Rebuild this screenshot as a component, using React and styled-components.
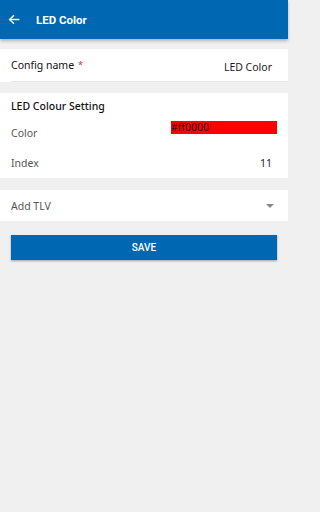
import React from 'react'
import styled, { createGlobalStyle } from 'styled-components'

const Global = createGlobalStyle`
  html, body {
    margin: 0;
    padding: 0;
    background: #f0f0f0;
    font-family: "Noto Sans", Roboto, sans-serif;
  }
`

const Page = styled.div`
  width: 288px;
  min-height: 512px;
  background: #f0f0f0;
`

const Header = styled.div`
  height: 39px;
  background: #0067b2;
  display: flex;
  align-items: center;
  padding-left: 8px;
  box-shadow: 0 2px 3px rgba(0, 0, 0, 0.25);
  color: #fff;
`

const HeaderTitle = styled.span`
  font-family: Roboto, sans-serif;
  font-weight: 700;
  font-size: 11.5px;
  margin-left: 15px;
`

const Content = styled.div`
  display: flex;
  flex-direction: column;
  padding-top: 10px;
`

const Card = styled.div`
  background: #fff;
  margin-bottom: ${p => p.$gap || 11}px;
`

const Row = styled.div`
  display: flex;
  align-items: center;
  justify-content: space-between;
  height: ${p => p.$h || 28}px;
  padding: 0 16px 0 11px;
  border-bottom: ${p => (p.$line ? '1px solid #e6e6e6' : 'none')};
  margin-left: ${p => (p.$line ? 11 : 0)}px;
  padding-left: ${p => (p.$line ? 0 : 11)}px;
`

const Label = styled.span`
  font-size: 10.5px;
  color: ${p => (p.$dark ? '#111' : '#555')};
  font-weight: ${p => (p.$bold ? 500 : 400)};
`

const Star = styled.span`
  color: #d0303a;
  font-size: 9px;
  margin-left: 4px;
  vertical-align: top;
`

const Value = styled.span`
  font-size: 10.5px;
  color: #222;
`

const ColorBox = styled.div`
  width: 106px;
  height: 13px;
  background: ${p => p.$color};
  font-size: 10.5px;
  line-height: 12px;
  color: #111;
  align-self: flex-start;
  margin-top: 2px;
  margin-right: -5px;
`

const Caret = styled.span`
  width: 0;
  height: 0;
  border-left: 4px solid transparent;
  border-right: 4px solid transparent;
  border-top: 4px solid #888;
  margin-right: -2px;
`

const SaveButton = styled.button`
  margin: 3px 11px 0;
  height: 25px;
  border: none;
  background: #0067b2;
  color: #fff;
  font-family: Roboto, sans-serif;
  font-size: 10px;
  font-weight: 500;
  box-shadow: 0 1px 2px rgba(0, 0, 0, 0.35);
`

const BackArrow = () => (
  <svg width="13" height="13" viewBox="0 0 24 24" fill="none" stroke="#fff" strokeWidth="2.6">
    <path d="M21 12H4" />
    <path d="M11 4l-8 8 8 8" />
  </svg>
)

export default function App() {
  return (
    <Page>
      <Global />
      <Header>
        <BackArrow />
        <HeaderTitle>LED Color</HeaderTitle>
      </Header>
      <Content>
        <Card>
          <Row $h={32} $line>
            <Label $dark>Config name<Star>*</Star></Label>
            <Value style={{ marginTop: 4 }}>LED Color</Value>
          </Row>
        </Card>
        <Card $gap={12}>
          <Row $h={26}>
            <Label $dark $bold>LED Colour Setting</Label>
          </Row>
          <Row $h={28}>
            <Label>Color</Label>
            <ColorBox $color="#ff0000">#ff0000</ColorBox>
          </Row>
          <Row $h={31}>
            <Label>Index</Label>
            <Value>11</Value>
          </Row>
        </Card>
        <Card $gap={11}>
          <Row $h={31}>
            <Label>Add TLV</Label>
            <Caret />
          </Row>
        </Card>
        <SaveButton>SAVE</SaveButton>
      </Content>
    </Page>
  )
}
